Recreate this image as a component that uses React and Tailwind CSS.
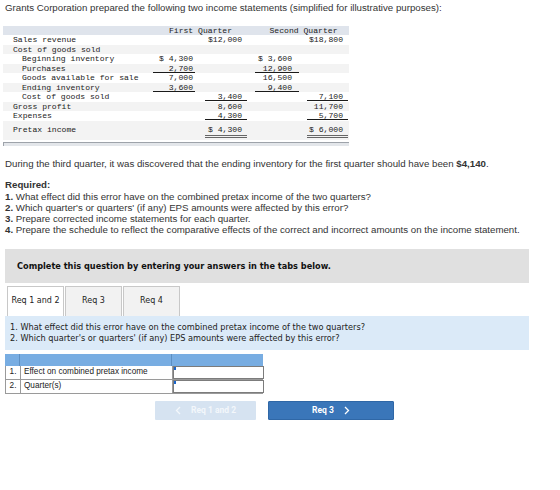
import React from 'react';

// income statement rows: c1..c4 are the four amount columns, u1..u4 mark a rule under the amount
const ROWS = [
  { label: 'Sales revenue', c2: '$12,000', c4: '$18,800' },
  { label: 'Cost of goods sold' },
  { label: 'Beginning inventory', sub: true, c1: '$ 4,300', c3: '$ 3,600' },
  { label: 'Purchases', sub: true, c1: '2,700', c3: '12,900', u1: true, u3: true },
  { label: 'Goods available for sale', sub: true, c1: '7,000', c3: '16,500' },
  { label: 'Ending inventory', sub: true, c1: '3,600', c3: '9,400', u1: true, u3: true },
  { label: 'Cost of goods sold', sub: true, c2: '3,400', c4: '7,100', u2: true, u4: true },
  { label: 'Gross profit', c2: '8,600', c4: '11,700' },
  { label: 'Expenses', c2: '4,300', c4: '5,700', u2: true, u4: true },
];

const COLS = [
  { key: 'c1', line: 'u1', cell: 'pr-[2px]', box: 'w-[42px]', text: 'pr-[2px]' },
  { key: 'c2', line: 'u2', cell: 'pr-[2px]', box: 'w-[42px]', text: 'pr-[5px]' },
  { key: 'c3', line: 'u3', cell: 'pr-[1px]', box: 'w-[44px]', text: 'pr-[7px]' },
  { key: 'c4', line: 'u4', cell: 'pr-[1px]', box: 'w-[41px]', text: 'pr-[5px]' },
];

function Amount({ value, line, box, text }) {
  return (
    <div className={`flex h-[8px] flex-col ${box}`}>
      <div className={`h-[7px] text-right leading-[7px] ${text}`}>{value}</div>
      {line ? <div className="h-[1px] w-full shrink-0 bg-[#1a1a1a]" /> : null}
    </div>
  );
}

function IncomeStatement() {
  return (
    <div className="ml-[3px] w-[346px] font-['Liberation_Mono',monospace] text-[8.1px] text-[#222]">
      {/* column headings */}
      <div className="grid h-[9px] grid-cols-[149px_97px_100px] items-center bg-[#dfe4ec] leading-[9px]">
        <div />
        <div className="text-center">First Quarter</div>
        <div className="pl-[9px] text-center">Second Quarter</div>
      </div>

      {ROWS.map((row, i) => (
        <div
          key={i}
          className={`grid grid-cols-[149px_45px_52px_51px_49px] items-center ${
            i % 2 === 1 ? 'h-[9px] bg-[#f3f3f3] leading-[9px]' : 'h-[10px] leading-[10px]'
          }`}
        >
          <div className={row.sub ? 'pl-[19px]' : 'pl-[10px]'}>{row.label}</div>
          {COLS.map((col) => (
            <div key={col.key} className={`flex justify-end ${col.cell}`}>
              {row[col.key] && (
                <Amount value={row[col.key]} line={row[col.line]} box={col.box} text={col.text} />
              )}
            </div>
          ))}
        </div>
      ))}

      {/* pretax income with double rule */}
      <div className="grid h-[19px] grid-cols-[149px_45px_52px_51px_49px] items-start bg-[#f3f3f3] pt-[4px]">
        <div className="pl-[10px] leading-[9px]">Pretax income</div>
        <div />
        <div className="flex justify-end pr-[2px]">
          <span className="inline-block w-[42px] border-b-[3px] border-double border-[#666] pb-[1px] pr-[5px] text-right leading-[9px]">
            $ 4,300
          </span>
        </div>
        <div />
        <div className="flex justify-end pr-[1px]">
          <span className="inline-block w-[41px] border-b-[3px] border-double border-[#666] pb-[1px] pr-[5px] text-right leading-[9px]">
            $ 6,000
          </span>
        </div>
      </div>

      <div className="mt-[2px] h-[4px] border-l border-t border-[#9ea3aa] bg-[#e3e6ea]" />
    </div>
  );
}

function ChevronLeft() {
  return (
    <svg width="6" height="9" viewBox="0 0 6 9" fill="none">
      <path d="M5 1 L1.5 4.5 L5 8" stroke="currentColor" strokeWidth="1.3" />
    </svg>
  );
}

function ChevronRight() {
  return (
    <svg width="6" height="9" viewBox="0 0 6 9" fill="none">
      <path d="M1 1 L4.5 4.5 L1 8" stroke="currentColor" strokeWidth="1.3" />
    </svg>
  );
}

const TABS = ['Req 1 and 2', 'Req 3', 'Req 4'];

export default function App() {
  return (
    <div className="h-[490px] w-[560px] bg-white font-['Liberation_Sans',Arial,sans-serif] text-[#333]">
      <p className="px-[5px] pt-[2px] text-[9.7px] leading-[12px]">
        Grants Corporation prepared the following two income statements (simplified for illustrative purposes):
      </p>

      <div className="mt-[12px]">
        <IncomeStatement />
      </div>

      <div className="px-[5px] text-[9.7px] leading-[11.3px]">
        <p className="mt-[12px]">
          During the third quarter, it was discovered that the ending inventory for the first quarter should have been{' '}
          <span className="font-bold">$4,140</span>.
        </p>
        <p className="mt-[10px] font-bold">Required:</p>
        <p>
          <span className="font-bold">1.</span> What effect did this error have on the combined pretax income of the two quarters?
        </p>
        <p>
          <span className="font-bold">2.</span> Which quarter's or quarters' (if any) EPS amounts were affected by this error?
        </p>
        <p>
          <span className="font-bold">3.</span> Prepare corrected income statements for each quarter.
        </p>
        <p>
          <span className="font-bold">4.</span> Prepare the schedule to reflect the comparative effects of the correct and incorrect amounts on the income statement.
        </p>
      </div>

      {/* instructions banner */}
      <div className="ml-[5px] mt-[13px] flex h-[34px] w-[524px] items-center bg-[#e0e0e0] pl-[12px] font-['DejaVu_Sans',Verdana,sans-serif] text-[8.2px] font-bold text-[#111]">
        Complete this question by entering your answers in the tabs below.
      </div>

      {/* requirement tabs */}
      <div className="ml-[7px] mt-[3px] flex gap-[1px] font-['DejaVu_Sans',Verdana,sans-serif] text-[8px] text-[#222]">
        {TABS.map((tab, i) => (
          <div
            key={tab}
            className={`flex h-[30px] w-[57px] items-center justify-center border border-b-0 border-[#c8c8c8] ${
              i === 0 ? 'bg-white' : 'bg-[#f2f2f2]'
            }`}
          >
            {tab}
          </div>
        ))}
      </div>

      <div className="ml-[5px] flex h-[34px] w-[524px] flex-col justify-center bg-[#dbeaf8] pl-[5px] font-['DejaVu_Sans',Verdana,sans-serif] text-[8.2px] leading-[11px] text-[#222]">
        <p>1. What effect did this error have on the combined pretax income of the two quarters?</p>
        <p>2. Which quarter's or quarters' (if any) EPS amounts were affected by this error?</p>
      </div>

      {/* answer grid */}
      <div className="ml-[5px] mt-[4px] w-[258px] text-[8.2px] text-[#222]">
        <div className="grid h-[12px] grid-cols-[15px_152px_91px] bg-[#78ade2]">
          <div className="border-r border-[#5d8fc2]" />
          <div className="border-r border-[#5d8fc2]" />
          <div />
        </div>
        {['Effect on combined pretax income', 'Quarter(s)'].map((label, i) => (
          <div key={label} className="grid h-[14px] grid-cols-[15px_152px_91px] border-b border-l border-[#9a9a9a]">
            <div className="flex items-center justify-center border-r border-[#9a9a9a]">{i + 1}.</div>
            <div className="flex items-center border-r border-[#9a9a9a] pl-[3px]">{label}</div>
            <div className="relative border-[1.5px] border-[#7c7c7c] bg-white">
              <span className="absolute left-0 top-0 h-[3px] w-[2px] bg-[#1a66cc]" />
            </div>
          </div>
        ))}
      </div>

      {/* tab navigation */}
      <div className="ml-[155px] mt-[7px] flex gap-[12px] font-['Roboto',Arial,sans-serif] text-[8.5px] font-bold">
        <div className="flex h-[19px] w-[101px] items-center justify-center gap-[10px] rounded-[1px] bg-[#d6e3f1] text-[#f3f7fb]">
          <ChevronLeft />
          <span>Req 1 and 2</span>
        </div>
        <div className="flex h-[19px] w-[126px] items-center justify-center gap-[10px] rounded-[1px] border border-[#2f67a6] bg-[#3a76b9] text-white">
          <span>Req 3</span>
          <ChevronRight />
        </div>
      </div>
    </div>
  );
}
